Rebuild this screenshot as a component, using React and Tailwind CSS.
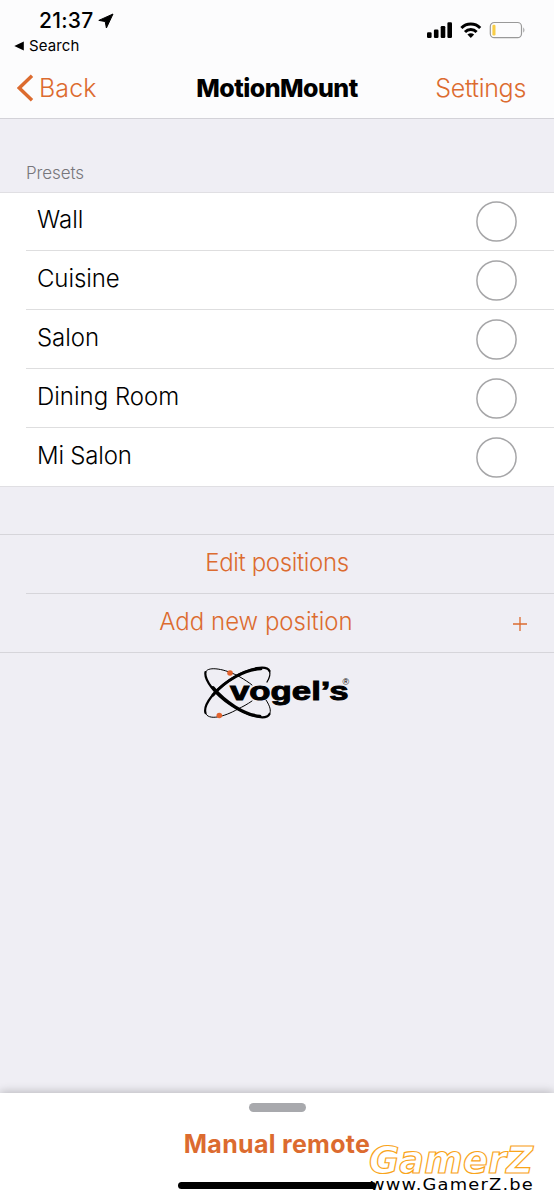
const presets = [
  { name: 'Wall', tracking: 'tracking-[0px]' },
  { name: 'Cuisine', tracking: 'tracking-[-0.1px]' },
  { name: 'Salon', tracking: 'tracking-[-0.05px]' },
  { name: 'Dining Room', tracking: 'tracking-[0px]' },
  { name: 'Mi Salon', tracking: 'tracking-[-0.2px]' },
];

function StatusBar() {
  return (
    <div className="flex h-[58px] justify-between">
      <div className="pl-[14px] pt-[9px] text-black">
        <div className="flex h-6 items-center pl-[25px]">
          <span className="text-[21px] font-medium leading-6 tracking-[0.25px]">21:37</span>
          <svg className="ml-[5px]" width="16" height="16" viewBox="0 0 16 16">
            <path d="M15 1 L0.8 7.4 L7.2 8.5 L8.4 15 Z" stroke="black" strokeWidth="1" strokeLinejoin="round" />
          </svg>
        </div>
        <div className="mt-[3px] flex h-5 items-center">
          <svg width="10" height="10" viewBox="0 0 10 10">
            <path d="M0.3 5 L9.8 0.5 V9.5 Z" />
          </svg>
          <span className="ml-[5px] text-[15px] font-normal leading-5 tracking-[0.1px]">Search</span>
        </div>
      </div>
      <svg className="mr-[28px] mt-[20px]" width="99" height="20" viewBox="0 0 99 20">
        <rect x="0" y="12.2" width="4.6" height="5.8" rx="1.2" />
        <rect x="6.9" y="9.5" width="4.6" height="8.5" rx="1.2" />
        <rect x="13.7" y="6" width="4.6" height="12" rx="1.2" />
        <rect x="20.4" y="2.2" width="4.6" height="15.8" rx="1.2" />
        <g fill="none" stroke="black" strokeWidth="3">
          <path d="M34.4 8 A13.2 13.2 0 0 1 53.2 8" />
          <path d="M38 12 A8.2 8.2 0 0 1 49.6 12" />
        </g>
        <path d="M43.8 18 L40.4 14.5 Q43.8 11.8 47.2 14.5 Z" />
        <rect x="63.3" y="2.5" width="31.2" height="15.2" rx="4" fill="none" stroke="#999" strokeWidth="1.2" />
        <rect x="65.4" y="4.8" width="3.1" height="10.6" rx="1.2" fill="#f8cd46" />
        <path d="M96.3 7.3 Q98.6 10.1 96.3 12.8 Z" fill="#999" />
      </svg>
    </div>
  );
}

function NavBar() {
  return (
    <div className="grid h-[60px] grid-cols-[1fr_auto_1fr] items-center text-[#dc6b2f]">
      <div className="flex items-center pl-[17px]">
        <svg width="18" height="30" viewBox="0 0 18 30">
          <path d="M15 2.8 L2.3 15 L15 27.2" fill="none" stroke="currentColor" strokeWidth="3.4" />
        </svg>
        <span className="ml-[4px] text-[25px] font-light leading-8 tracking-[0.1px]">Back</span>
      </div>
      <h1 className="text-[25px] font-extrabold leading-8 tracking-[-0.55px] text-black">MotionMount</h1>
      <span className="justify-self-end pr-[28px] text-[25px] font-light leading-8 tracking-[-0.3px]">Settings</span>
    </div>
  );
}

function Logo() {
  return (
    <svg width="152" height="56" viewBox="200 664 152 56">
      <g fill="none" stroke="black" strokeLinecap="round">
        <path d="M205.5 674 C204 666 222 667 240 677 C245 680 249 682.5 252 685" strokeWidth="1" />
        <path d="M266 700 C270 706 271.5 711 269.5 714" strokeWidth="1" />
        <path d="M205.5 672 C204 679 214 694 231 705 C247 716 266 721 269.5 714" strokeWidth="2.2" />
        <path d="M213 687.5 C225 702 244 714.5 260 716.3" strokeWidth="3" />
        <path d="M205.5 713 C203 705 214 690 233 678 C250 667 267 665 269.5 671" strokeWidth="2.2" />
        <path d="M213 695 C226 680 245 669.5 261 668.7" strokeWidth="3" />
        <path d="M269.5 671 C270.5 674 269.5 678 267 682" strokeWidth="1.3" />
        <path d="M252 701 C247 704.5 243 706.5 238 709 C224 717 208 721 205.5 713" strokeWidth="1" />
      </g>
      <circle cx="230" cy="673" r="2.8" fill="#e2632e" />
      <circle cx="219.3" cy="715.5" r="2.8" fill="#e2632e" />
      <text x="230" y="699.5" textLength="118.5" lengthAdjust="spacingAndGlyphs" className="font-['Liberation_Sans'] text-[25px] font-bold" stroke="black" strokeWidth="0.9">vogel’s</text>
      <text x="342.6" y="684.5" className="font-['Liberation_Sans'] text-[9px]">®</text>
    </svg>
  );
}

export default function App() {
  return (
    <div className="relative flex h-[1200px] w-[554px] flex-col overflow-hidden bg-[#efeef4] font-['Inter',sans-serif]">
      <header className="h-[119px] shrink-0 border-b border-[#d3d2d8] bg-[#fcfcfd]">
        <StatusBar />
        <NavBar />
      </header>
      <main className="flex grow flex-col">
        <h2 className="h-[73px] pl-[26px] pt-[42px] text-[17px] font-light leading-6 tracking-[-0.1px] text-[#77767b]">Presets</h2>
        <ul className="border-y border-[#e0dfe3] bg-white text-black">
          {presets.map(({ name, tracking }) => (
            <li key={name} className="group pl-[26px]">
              <div className="flex h-[59px] items-center justify-between border-b border-[#dededf] pl-[11px] pr-[37px] group-first:h-[58px] group-last:h-[58px] group-last:border-0">
                <span className={`pb-[3px] text-[24px] font-light leading-8 ${tracking}`}>{name}</span>
                <svg width="41" height="41" viewBox="0 0 41 41">
                  <circle cx="20.5" cy="20.5" r="19.6" fill="none" stroke="#a6a6a8" strokeWidth="1.5" />
                </svg>
              </div>
            </li>
          ))}
        </ul>
        <div className="mt-[47px] border-y border-[#d6d5da] text-[24px] font-light text-[#dc6b2f]">
          <div className="pl-[26px]">
            <div className="flex h-[59px] items-center justify-center border-b border-[#d6d5da] pb-[2px] pr-[26px] tracking-[-0.35px]">Edit positions</div>
          </div>
          <div className="grid h-[58px] grid-cols-[512px_1fr] items-center pb-[3px]">
            <span className="text-center">Add new position</span>
            <svg className="mt-[4px]" width="16" height="16" viewBox="0 0 16 16">
              <path d="M8 1 V15 M1 8 H15" stroke="currentColor" strokeWidth="1.3" />
            </svg>
          </div>
        </div>
        <div className="mt-[11px] pl-[200px]"><Logo /></div>
      </main>
      <footer className="flex h-[107px] shrink-0 flex-col items-center bg-white shadow-[0_-1px_9px_rgba(0,0,0,0.24)]">
        <div className="mt-[10px] h-[9px] w-[57px] rounded-full bg-[#a8a9ad]" />
        <button className="mt-[16px] text-[25px] font-bold leading-8 tracking-[0.3px] text-[#dc6b2f]">Manual remote</button>
        <div className="mt-[22px] h-[7px] w-[198px] rounded-full bg-black" />
      </footer>
      <div className="absolute left-[369px] top-[1139px] whitespace-nowrap font-['DejaVu_Sans',sans-serif]">
        <div className="text-[37px] font-bold italic leading-[44px] text-white [-webkit-text-stroke:1.2px_#f9a51b]">GamerZ</div>
        <div className="absolute left-[1px] top-[36px] origin-left scale-x-[1.19] text-[15px] leading-5 tracking-[1px] text-black">www.GamerZ.be</div>
      </div>
    </div>
  );
}
